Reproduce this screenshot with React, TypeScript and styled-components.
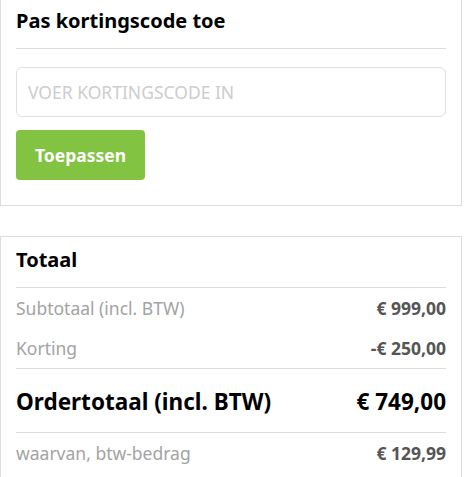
import React from "react";
import styled, { createGlobalStyle } from "styled-components";

const GlobalStyle = createGlobalStyle`
  * { box-sizing: border-box; }
  body {
    margin: 0;
    background: #fff;
    font-family: "Noto Sans", "Open Sans", Arial, sans-serif;
    color: #000;
  }
`;

const Page = styled.div`
  width: 462px;
  margin-top: -3px;
  display: flex;
  flex-direction: column;
  gap: 30px;
`;

const Card = styled.section`
  border: 1px solid #ddd;
  background: #fff;
  padding: 0 15px 25px;
`;

const CardTitle = styled.h2`
  margin: 0;
  padding: 9px 0 14px;
  font-size: 20px;
  line-height: 27px;
  font-weight: 700;
  border-bottom: 1px solid #ddd;
`;

const CodeInput = styled.input`
  display: block;
  width: 100%;
  height: 50px;
  margin-top: 18px;
  padding: 0 11px;
  border: 1px solid #e0e0e0;
  border-radius: 6px;
  font-family: inherit;
  font-size: 17.5px;
  color: #333;
  outline: none;
  &::placeholder {
    color: #cdcdcd;
    text-transform: uppercase;
  }
`;

const ApplyButton = styled.button`
  display: block;
  margin-top: 13px;
  height: 50px;
  padding: 0 19px;
  border: none;
  border-radius: 4px;
  background: #82c341;
  color: #fff;
  font-family: inherit;
  font-size: 17.5px;
  font-weight: 700;
  cursor: pointer;
`;

const Row = styled.div<{ $big?: boolean; $divider?: boolean }>`
  display: flex;
  justify-content: space-between;
  align-items: center;
  padding: ${(p) => (p.$big ? "17px 0 15px" : "8px 0")};
  line-height: ${(p) => (p.$big ? "31px" : "24px")};
  font-size: ${(p) => (p.$big ? "22.5px" : "17.5px")};
  border-top: ${(p) => (p.$divider ? "1px solid #ddd" : "none")};
`;

const Label = styled.span<{ $big?: boolean }>`
  color: ${(p) => (p.$big ? "#000" : "#a3a3a3")};
  font-weight: ${(p) => (p.$big ? 700 : 400)};
`;

const Amount = styled.span<{ $big?: boolean }>`
  color: ${(p) => (p.$big ? "#000" : "#555")};
  font-weight: 700;
`;

const TotalsCard = styled(Card)`
  padding-bottom: 12px;
`;

export default function App() {
  return (
    <>
      <GlobalStyle />
      <Page>
        <Card>
          <CardTitle>Pas kortingscode toe</CardTitle>
          <CodeInput placeholder="Voer kortingscode in" />
          <ApplyButton>Toepassen</ApplyButton>
        </Card>
        <TotalsCard>
          <CardTitle>Totaal</CardTitle>
          <Row>
            <Label>Subtotaal (incl. BTW)</Label>
            <Amount>€ 999,00</Amount>
          </Row>
          <Row>
            <Label>Korting</Label>
            <Amount>-€ 250,00</Amount>
          </Row>
          <Row $big $divider>
            <Label $big>Ordertotaal (incl. BTW)</Label>
            <Amount $big>€ 749,00</Amount>
          </Row>
          <Row $divider>
            <Label>waarvan, btw-bedrag</Label>
            <Amount>€ 129,99</Amount>
          </Row>
        </TotalsCard>
      </Page>
    </>
  );
}
